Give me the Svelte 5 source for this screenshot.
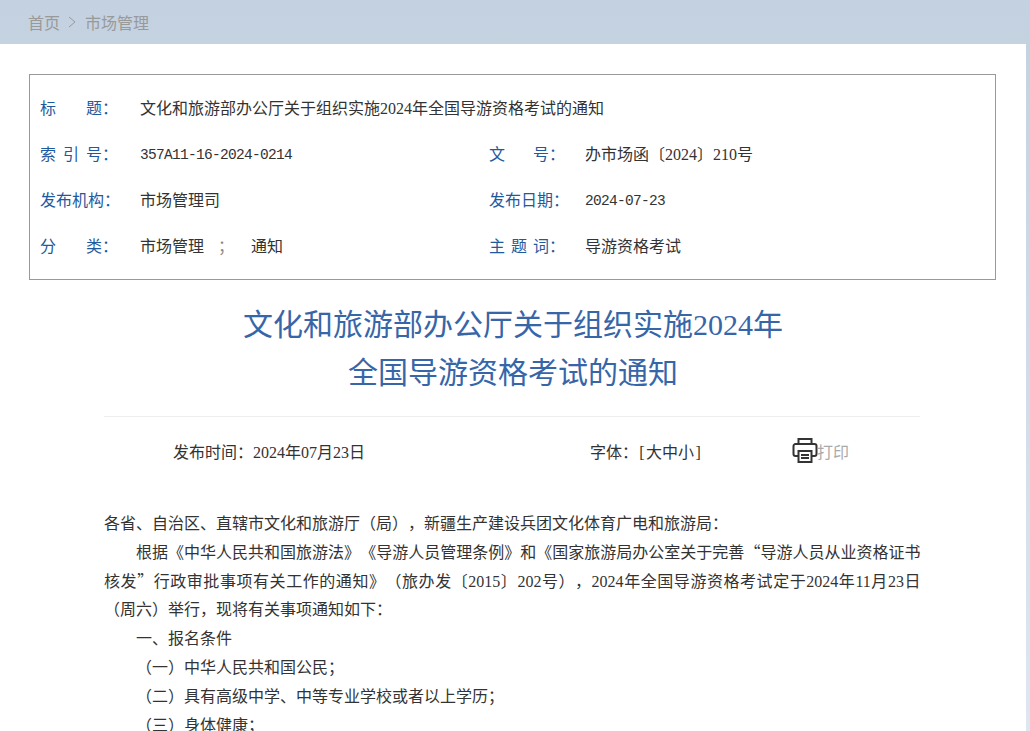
<script>
  const rows = [
    [['索引号', '357A11-16-2024-0214', true], ['文号', '办市场函〔2024〕210号', false]],
    [['发布机构', '市场管理司', false], ['发布日期', '2024-07-23', true]],
    [['分类', '市场管理', false], ['主题词', '导游资格考试', false]]
  ]
</script>

<div class="page">
  <div class="crumbs">
    <span>首页</span>
    <svg class="arrow" width="8" height="12" viewBox="0 0 8 12"><path d="M1 1l6 5-6 5" /></svg>
    <span>市场管理</span>
  </div>

  <div class="main">
    <div class="info">
      <div class="row">
        <span class="label"><span class="chars"><i>标</i><i>题</i></span>：</span>
        <span class="value">文化和旅游部办公厅关于组织实施2024年全国导游资格考试的通知</span>
      </div>
      {#each rows as row}
        <div class="row">
          {#each row as cell, i}
            <div class="cell" class:right={i === 1}>
              <span class="label">
                <span class="chars">{#each cell[0] as c}<i>{c}</i>{/each}</span>：
              </span>
              <span class="value" class:code={cell[2]}>{cell[1]}{#if cell[1] === '市场管理'}<span class="sep">；</span>通知{/if}</span>
            </div>
          {/each}
        </div>
      {/each}
    </div>

    <h1>文化和旅游部办公厅关于组织实施2024年<br />全国导游资格考试的通知</h1>

    <div class="meta">
      <span class="date">发布时间：2024年07月23日</span>
      <span class="size">字体：<span class="br">[</span>大中小<span class="br">]</span></span>
      <svg class="print" width="26" height="27" viewBox="0 0 26 27">
        <path d="M6.5 7V2h13v5" />
        <path d="M6.5 19H3.5a2 2 0 0 1-2-2V9a2 2 0 0 1 2-2h19a2 2 0 0 1 2 2v8a2 2 0 0 1-2 2h-3" />
        <path d="M6.5 14h13v11h-13z" />
        <path d="M9 18h8M9 21h8" />
      </svg>
      <span class="print-text">打印</span>
    </div>

    <div class="body">
      <p>各省、自治区、直辖市文化和旅游厅（局），新疆生产建设兵团文化体育广电和旅游局：</p>
      <p class="in">根据《中华人民共和国旅游法》《导游人员管理条例》和《国家旅游局办公室关于完善<span class="q">“</span>导游人员从业资格证书核发<span class="q">”</span>行政审批事项有关工作的通知》（旅办发〔2015〕202号），2024年全国导游资格考试定于2024年11月23日（周六）举行，现将有关事项通知如下：</p>
      <p class="in">一、报名条件</p>
      <p class="in">（一）中华人民共和国公民；</p>
      <p class="in">（二）具有高级中学、中等专业学校或者以上学历；</p>
      <p class="in">（三）身体健康；</p>
    </div>
  </div>
</div>

<style>
  :global(html), :global(body) {
    margin: 0;
    height: 731px;
    overflow: hidden;
  }

  .page {
    height: 731px;
    overflow: hidden;
    background: linear-gradient(#c3d1e0, #dfe6ef);
    font-family: "Liberation Serif", "Noto Sans CJK SC", serif;
    font-size: 16px;
    color: #333;
    text-spacing-trim: space-all;
  }

  .crumbs {
    height: 44px;
    display: flex;
    align-items: center;
    padding-left: 28px;
    color: #999;
  }

  .arrow {
    margin: 0 9px 0 8px;
  }

  .arrow path {
    fill: none;
    stroke: #999;
  }

  .main {
    height: 687px;
    margin-right: 4px;
    padding-top: 30px;
    background: #fff;
  }

  .info {
    box-sizing: border-box;
    width: 967px;
    height: 206px;
    margin-left: 29px;
    padding: 9px 10px;
    border: 1px solid #999;
  }

  .row {
    display: flex;
    align-items: center;
    height: 46px;
  }

  .cell {
    display: flex;
    align-items: center;
    width: 449px;
  }

  .label {
    display: flex;
    width: 100px;
    flex: none;
    color: #1f5a9e;
  }

  .chars {
    display: flex;
    justify-content: space-between;
    min-width: 62px;
  }

  .chars i {
    font-style: normal;
  }

  .right .label {
    width: 96px;
  }

  .right .chars {
    min-width: 60px;
  }

  .code {
    padding-top: 4px;
    font-family: "Liberation Mono", "Noto Sans CJK SC", monospace;
    font-size: 14.5px;
    letter-spacing: -0.7px;
  }

  .sep {
    margin: 0 17px 0 14px;
    color: #888;
  }

  h1 {
    margin: 21px 0 0;
    font-size: 30px;
    font-weight: normal;
    line-height: 48px;
    text-align: center;
    color: #3766a8;
  }

  .meta {
    box-sizing: border-box;
    display: flex;
    align-items: center;
    width: 816px;
    height: 70px;
    margin: 19px 0 0 104px;
    padding-bottom: 2px;
    border-top: 1px solid #eee;
  }

  .date {
    margin-left: 69px;
  }

  .size {
    margin-left: 225px;
  }

  .br {
    display: inline-block;
    width: 8px;
    text-align: center;
  }

  .print {
    margin: 0 -1px 0 90px;
  }

  .print path {
    fill: none;
    stroke: #333;
    stroke-width: 2;
  }

  .print-text {
    color: #aaa;
  }

  .body {
    width: 816.5px;
    margin-left: 104px;
    padding-top: 24px;
    line-height: 28.8px;
    text-align: justify;
  }

  p {
    margin: 0;
  }

  .in {
    text-indent: 32px;
  }

  .q {
    font-family: "Noto Sans CJK SC", sans-serif;
    line-height: 0;
  }
</style>
